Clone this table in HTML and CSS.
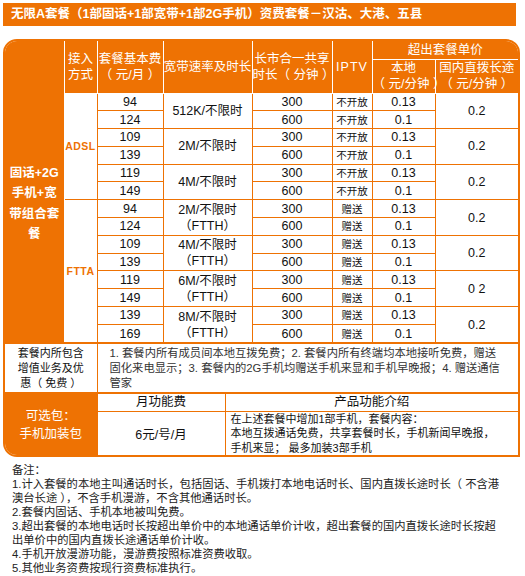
FILE: index.html
```html
<!DOCTYPE html>
<html lang="zh-CN">
<head>
<meta charset="utf-8">
<title>无限A套餐</title>
<link rel="stylesheet" href="styles.css">
</head>
<body>
<div class="page">
  <div class="title">无限A套餐（1部固话+1部宽带+1部2G手机）资费套餐－汉沽、大港、五县</div>

  <div class="box">
    <table class="main">
      <colgroup>
        <col class="c1"><col class="c2"><col class="c3"><col class="c4"><col class="c5"><col class="c6"><col class="c7"><col class="c8">
      </colgroup>
      <tr class="h1">
        <td class="side" rowspan="16">固话+2G<br>手机+宽<br>带组合套<br>餐</td>
        <th rowspan="2">接入<br>方式</th>
        <th rowspan="2">套餐基本费<br>（ 元/月 ）</th>
        <th rowspan="2">宽带速率及时长</th>
        <th rowspan="2">长市合一共享<br>时长（ 分钟 ）</th>
        <th rowspan="2" class="iptv">IPTV</th>
        <th colspan="2">超出套餐单价</th>
      </tr>
      <tr class="h2">
        <th>本地<br>（ 元/分钟 ）</th>
        <th>国内直拨长途<br>（ 元/分钟 ）</th>
      </tr>

      <tr class="r">
        <td class="acc" rowspan="6">ADSL</td>
        <td>94</td><td rowspan="2">512K/不限时</td><td>300</td><td class="ip">不开放</td><td>0.13</td><td rowspan="2">0.2</td>
      </tr>
      <tr class="r"><td>124</td><td>600</td><td class="ip">不开放</td><td>0.1</td></tr>
      <tr class="r">
        <td>109</td><td rowspan="2">2M/不限时</td><td>300</td><td class="ip">不开放</td><td>0.13</td><td rowspan="2">0.2</td>
      </tr>
      <tr class="r"><td>139</td><td>600</td><td class="ip">不开放</td><td>0.1</td></tr>
      <tr class="r">
        <td>119</td><td rowspan="2">4M/不限时</td><td>300</td><td class="ip">不开放</td><td>0.13</td><td rowspan="2">0.2</td>
      </tr>
      <tr class="r"><td>149</td><td>600</td><td class="ip">不开放</td><td>0.1</td></tr>

      <tr class="r">
        <td class="acc" rowspan="8">FTTA</td>
        <td>94</td><td rowspan="2" class="sp">2M/不限时<br>（FTTH）</td><td>300</td><td class="ip">赠送</td><td>0.13</td><td rowspan="2">0.2</td>
      </tr>
      <tr class="r"><td>124</td><td>600</td><td class="ip">赠送</td><td>0.1</td></tr>
      <tr class="r">
        <td>109</td><td rowspan="2" class="sp">4M/不限时<br>（FTTH）</td><td>300</td><td class="ip">赠送</td><td>0.13</td><td rowspan="2">0.2</td>
      </tr>
      <tr class="r"><td>139</td><td>600</td><td class="ip">赠送</td><td>0.1</td></tr>
      <tr class="r">
        <td>119</td><td rowspan="2" class="sp">6M/不限时<br>（FTTH）</td><td>300</td><td class="ip">赠送</td><td>0.13</td><td rowspan="2">0 2</td>
      </tr>
      <tr class="r"><td>149</td><td>600</td><td class="ip">赠送</td><td>0.1</td></tr>
      <tr class="r">
        <td>139</td><td rowspan="2" class="sp">8M/不限时<br>（FTTH）</td><td>300</td><td class="ip">赠送</td><td>0.13</td><td rowspan="2">0.2</td>
      </tr>
      <tr class="r"><td>169</td><td>600</td><td class="ip">赠送</td><td>0.1</td></tr>
    </table>

    <div class="section">
      <table class="extra">
        <colgroup><col class="c12"><col></colgroup>
        <tr>
          <td class="lbl">套餐内所包含<br>增值业务及优<br>惠（ 免费 ）</td>
          <td class="txt">1. 套餐内所有成员间本地互拨免费；2. 套餐内所有终端均本地接听免费，赠送<br>固化来电显示；3. 套餐内的2G手机均赠送手机来显和手机早晚报；4. 赠送通信<br>管家</td>
        </tr>
      </table>
    </div>

    <div class="section">
      <table class="addon">
        <colgroup><col class="c12"><col class="fee"><col></colgroup>
        <tr class="ah">
          <td class="side2" rowspan="2">可选包：<br>手机加装包</td>
          <td class="hd">月功能费</td>
          <td class="hd">产品功能介绍</td>
        </tr>
        <tr class="ab">
          <td class="price">6元/号/月</td>
          <td class="desc">在上述套餐中增加1部手机，套餐内容：<br>本地互拨通话免费，共享套餐时长，手机新闻早晚报，<br>手机来显； 最多加装3部手机</td>
        </tr>
      </table>
    </div>
  </div>

  <div class="notes">
    备注：<br>
    1.计入套餐的本地主叫通话时长，包括固话、手机拨打本地电话时长、国内直拨长途时长（ 不含港<br>
    澳台长途 ），不含手机漫游，不含其他通话时长。<br>
    2.套餐内固话、手机本地被叫免费。<br>
    3.超出套餐的本地电话时长按超出单价中的本地通话单价计收，超出套餐的国内直拨长途时长按超<br>
    出单价中的国内直拨长途通话单价计收。<br>
    4.手机开放漫游功能，漫游费按照标准资费收取。<br>
    5.其他业务资费按现行资费标准执行。
  </div>
</div>
</body>
</html>
```

FILE: styles.css
```css
* { box-sizing: border-box; }

body {
  margin: 0;
  background: #ffffff;
  font-family: "Liberation Sans", "Noto Sans CJK SC", sans-serif;
  color: #111;
}

.page {
  width: 525px;
  padding: 3px 0 0 3px;
}

.title {
  width: 513px;
  height: 23px;
  background: #ee7203;
  color: #fff;
  font-weight: bold;
  font-size: 12.5px;
  line-height: 23px;
  padding-left: 8px;
  white-space: nowrap;
}

.box {
  margin-top: 13px;
  width: 517px;
  border: 2px solid #ee7203;
  border-radius: 14px 14px 0 14px;
  overflow: hidden;
  background: #fff;
}

table {
  border-collapse: collapse;
  border-style: hidden;
  table-layout: fixed;
  width: 513px;
}

td, th {
  padding: 0;
  text-align: center;
  vertical-align: middle;
}

.c1 { width: 59px; }
.c2 { width: 33px; }
.c3 { width: 66px; }
.c4 { width: 89px; }
.c5 { width: 80px; }
.c6 { width: 40px; }
.c7 { width: 63px; }
.c8 { width: 83px; }
.c12 { width: 92px; }
.fee { width: 128px; }

/* header */
.main th {
  background: #ee7203;
  color: #fff;
  font-weight: normal;
  font-size: 12.5px;
  line-height: 16px;
  border: 1px solid #fff;
  white-space: nowrap;
}
.main th.iptv {
  font-family: "Liberation Sans", sans-serif;
  letter-spacing: 1px;
}
.h1 { height: 18px; }
.h2 { height: 34px; }

.side {
  background: #ee7203;
  color: #fff;
  font-weight: bold;
  font-size: 12.5px;
  line-height: 20.5px;
  border-right: 1px solid #fff;
  padding-top: 24px;
}

/* body rows */
.r { height: 17.8px; }
.main .r td {
  border: 1px solid #ee7203;
  font-size: 12.5px;
  line-height: 14px;
  color: #111;
  white-space: nowrap;
}
.main .r td.sp { line-height: 16px; }
.main .r td.ip { font-size: 10.5px; }
.main .r td.acc {
  color: #ee7203;
  font-size: 10.5px;
  font-weight: bold;
  letter-spacing: 0.5px;
}

/* sections below */
.section {
  border-top: 2px solid #ee7203;
}

.extra tr { height: 48px; }
.extra td {
  border: 1px solid #ee7203;
}
.extra .lbl {
  font-size: 11px;
  line-height: 15px;
  color: #111;
}
.extra .txt {
  text-align: left;
  padding-left: 12px;
  font-size: 11.3px;
  line-height: 15px;
  color: #333;
  white-space: nowrap;
}

.addon td {
  border: 1px solid #ee7203;
}
.addon .ah { height: 17px; }
.addon .ab { height: 44px; }
.addon .side2 {
  background: #ee7203;
  color: #fff;
  font-size: 12.5px;
  line-height: 18px;
  border-right: 1px solid #ee7203;
}
.addon .hd {
  font-size: 12.5px;
  line-height: 15px;
  color: #111;
}
.addon .price {
  font-size: 12.5px;
  color: #111;
}
.addon .desc {
  text-align: left;
  padding-left: 5px;
  font-size: 11px;
  line-height: 14.5px;
  color: #111;
  white-space: nowrap;
}

.notes {
  margin-top: 6px;
  padding-left: 9px;
  font-size: 11.3px;
  line-height: 14px;
  color: #222;
  white-space: nowrap;
}
```
